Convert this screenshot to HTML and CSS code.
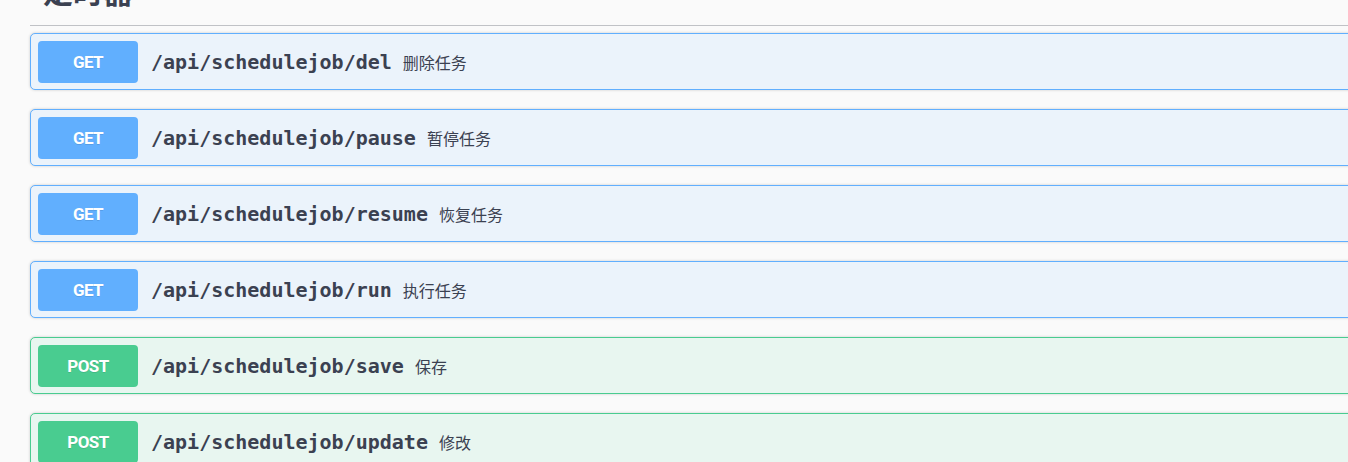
FILE: index.html
```html
<!DOCTYPE html>
<html lang="zh-CN">
<head>
<meta charset="utf-8">
<title>定时器</title>
<link rel="stylesheet" href="styles.css">
</head>
<body>
<section class="tag-section">
  <h4 class="tag-title"><span>定时器</span></h4>
  <div class="ops">
    <div class="opblock get">
      <div class="summary">
        <span class="method">GET</span>
        <span class="path">/api/schedulejob/del</span>
        <span class="desc">删除任务</span>
      </div>
    </div>
    <div class="opblock get">
      <div class="summary">
        <span class="method">GET</span>
        <span class="path">/api/schedulejob/pause</span>
        <span class="desc">暂停任务</span>
      </div>
    </div>
    <div class="opblock get">
      <div class="summary">
        <span class="method">GET</span>
        <span class="path">/api/schedulejob/resume</span>
        <span class="desc">恢复任务</span>
      </div>
    </div>
    <div class="opblock get">
      <div class="summary">
        <span class="method">GET</span>
        <span class="path">/api/schedulejob/run</span>
        <span class="desc">执行任务</span>
      </div>
    </div>
    <div class="opblock post">
      <div class="summary">
        <span class="method">POST</span>
        <span class="path">/api/schedulejob/save</span>
        <span class="desc">保存</span>
      </div>
    </div>
    <div class="opblock post">
      <div class="summary">
        <span class="method">POST</span>
        <span class="path">/api/schedulejob/update</span>
        <span class="desc">修改</span>
      </div>
    </div>
  </div>
</section>
</body>
</html>
```
FILE: styles.css
```css
html, body {
  margin: 0;
  padding: 0;
  background: #fafafa;
  overflow: hidden;
}
body {
  font-family: "Noto Sans", "Noto Sans CJK SC", sans-serif;
  color: #3b4151;
}
.tag-section {
  width: 1360px;
  padding-left: 30px;
  margin-top: -35px;
}
.tag-title {
  margin: 0 0 7px 0;
  padding: 7px 25px 17px 13px;
  border-bottom: 1px solid rgba(59, 65, 81, 0.3);
  font-family: "Noto Sans CJK SC", sans-serif;
  font-size: 30px;
  font-weight: 700;
  line-height: 36px;
  color: #3b4151;
}
.ops {
  display: flex;
  flex-direction: column;
  gap: 19px;
}
.opblock {
  border: 1px solid #61affe;
  border-radius: 5px;
  box-shadow: 0 0 3px rgba(0, 0, 0, 0.19);
}
.opblock.get {
  background: #ebf3fb;
  border-color: #61affe;
}
.opblock.post {
  background: #e8f6f0;
  border-color: #49cc90;
}
.summary {
  display: flex;
  align-items: center;
  padding: 6.5px 7px;
  height: 42px;
}
.method {
  width: 100px;
  height: 42px;
  flex: none;
  display: flex;
  align-items: center;
  justify-content: center;
  border-radius: 4px;
  color: #fff;
  font-family: Roboto, sans-serif;
  font-weight: 700;
  font-size: 17px;
  letter-spacing: -0.6px;
  text-shadow: 0 1px 0 rgba(0, 0, 0, 0.1);
}
.get .method { background: #61affe; }
.post .method { background: #49cc90; }
.path {
  padding: 0 11px 0 13px;
  font-family: "DejaVu Sans Mono", monospace;
  font-weight: 700;
  font-size: 20px;
  color: #3b4151;
}
.desc {
  font-family: "Noto Sans CJK SC", sans-serif;
  font-size: 16px;
  color: #3b4151;
}
```
